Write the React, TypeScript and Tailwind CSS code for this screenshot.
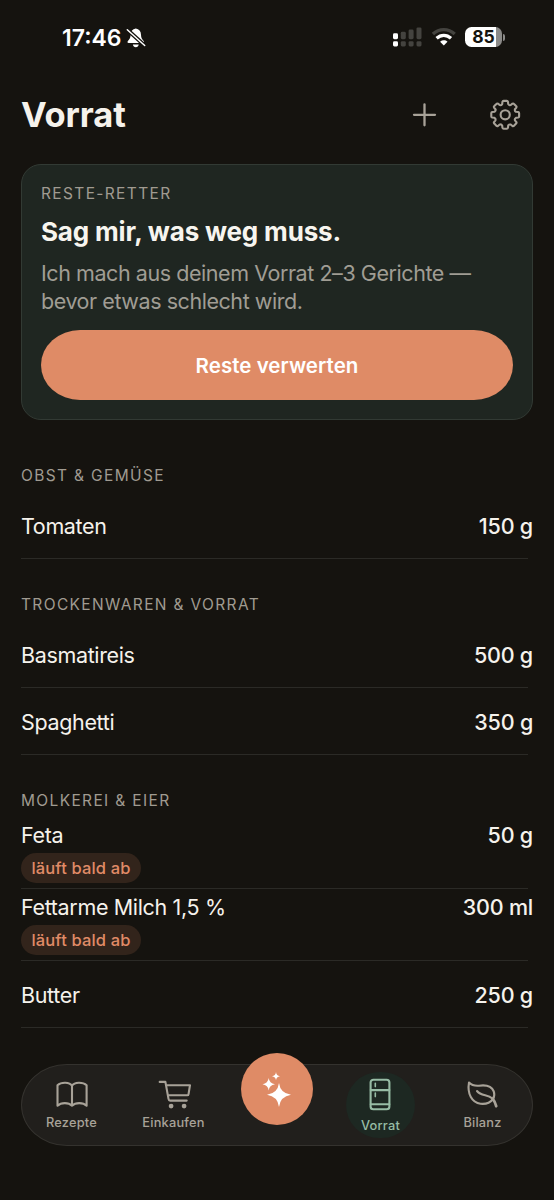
import type { ReactNode } from "react";

const UI = "font-['Inter','Liberation_Sans',sans-serif]";

function gearPath(cx: number, cy: number) {
  const polar = (r: number, deg: number) => {
    const a = (deg * Math.PI) / 180;
    return `${(cx + r * Math.sin(a)).toFixed(2)} ${(cy - r * Math.cos(a)).toFixed(2)}`;
  };
  let d = "";
  for (let i = 0; i < 8; i++) {
    const a = i * 45;
    d += `${i ? "L" : "M"}${polar(10.7, a - 19)} L${polar(11.2, a - 15.5)} L${polar(13.3, a - 12)} Q${polar(14.2, a - 10)} ${polar(14, a - 6)} L${polar(14, a + 6)} Q${polar(14.2, a + 10)} ${polar(13.3, a + 12)} L${polar(11.2, a + 15.5)} Q${polar(10.2, a + 22.5)} ${polar(10.7, a + 26)} `;
  }
  return d + "Z";
}

function StatusBar() {
  return (
    <div className="flex h-[75px] items-center justify-between pl-[62px] pr-[48px]">
      <div className="flex items-center">
        <span className="w-[64px] whitespace-nowrap pt-[1px] text-[23px] font-semibold leading-none tracking-[0px] text-white">17:46</span>
        <svg className="h-[20px] w-[20px]" viewBox="0 0 20 20">
          <path d="M9.8 0.6C6.4 1 4.7 3.4 4.6 6.8C4.5 10.2 3.4 11.5 1.9 13.1C1.1 14 1.4 15 2.6 15H16.8C18.2 15 18.4 14 17.7 13.1C16.1 11.4 15.1 10.2 15 6.8C14.9 3.3 13.1 1 9.8 0.6Z" fill="#fff" />
          <path d="M6.9 16.6H12.7C12.4 18.4 11.4 19.3 9.8 19.3C8.2 19.3 7.2 18.4 6.9 16.6Z" fill="#fff" />
          <path d="M1 1.4L18.8 17.6" stroke="#15130f" strokeWidth="4" />
          <path d="M1.3 1.7L18.7 17.5" stroke="#fff" strokeWidth="1.5" strokeLinecap="round" />
        </svg>
      </div>
      <div className="flex items-center pb-[1px]">
        <svg className="mr-[9px] h-[20px] w-[29px]" viewBox="0 0 29 20">
          <g fill="#fff">
            <rect x="0" y="6.2" width="5" height="6" rx="1.4" />
            <rect x="0" y="14.2" width="5" height="5.2" rx="1.4" />
          </g>
          <g fill="#44433f">
            <rect x="7.8" y="4.8" width="5" height="7.4" rx="1.4" />
            <rect x="15.6" y="2.5" width="5" height="9.7" rx="1.4" />
            <rect x="23.5" y="0.4" width="5" height="11.8" rx="1.4" />
            <rect x="7.8" y="14.2" width="5" height="5.2" rx="1.4" />
            <rect x="15.6" y="14.2" width="5" height="5.2" rx="1.4" />
            <rect x="23.5" y="14.2" width="5" height="5.2" rx="1.4" />
          </g>
        </svg>
        <svg className="mr-[8px] h-[20px] w-[26px]" viewBox="0 0 26 20" fill="none">
          <path d="M1.9 7.1C8.3 1.1 17.3 1.1 23.7 7.1" stroke="#44433f" strokeWidth="3.4" />
          <path d="M5.6 11.3C9.9 7.3 15.7 7.3 20 11.3" stroke="#fff" strokeWidth="3.3" />
          <path d="M9.1 14.7C11.3 12.8 14.3 12.8 16.5 14.7L12.8 18.4Z" fill="#fff" />
        </svg>
        <div className="flex h-5 w-[37px] items-center overflow-hidden rounded-[6.5px] bg-[linear-gradient(90deg,#fff_31px,#8b8a88_31px)]">
          <span className="w-full text-center text-[17.5px] font-bold leading-none text-[#15130f]">85</span>
        </div>
        <div className="ml-[1px] mr-[1px] h-[7px] w-[2px] rounded-r-full bg-[#8b8a88]" />
      </div>
    </div>
  );
}

function Label({ children }: { children: ReactNode }) {
  return <div className="whitespace-nowrap text-[15.5px] leading-[20px] tracking-[1.35px] text-[#a09b91]">{children}</div>;
}

function Row({ name, amount, soon }: { name: string; amount: string; soon?: boolean }) {
  return (
    <div className={soon ? "h-[72px]" : "h-[67px]"}>
      <div className={`flex items-center justify-between whitespace-nowrap text-[#f5f2ec] ${soon ? "h-[36px] pt-[2px]" : "h-[66px] pt-[3px]"}`}>
        <span className="text-[21.5px] leading-none tracking-[-0.35px]">{name}</span>
        <span className="text-[21.5px] font-medium leading-none tracking-[-0.2px]">{amount}</span>
      </div>
      {soon && (
        <div className="mb-[5px] flex h-[30px] w-[120px] items-center justify-center rounded-full bg-[#32241b] text-[16.5px] font-medium tracking-[0.15px] text-[#e08b67]">
          läuft bald ab
        </div>
      )}
      <div className="mr-[5px] h-px bg-[#2b2a26]" />
    </div>
  );
}

function Tab({ label, active, children }: { label: string; active?: boolean; children: ReactNode }) {
  return (
    <div
      className={
        active
          ? "flex h-[66px] w-[69px] flex-col items-center rounded-[33px] bg-[#1d2822] pt-[5px] text-[#97bca5]"
          : "flex h-[66px] w-[69px] flex-col items-center pt-[5px] text-[#a8a298]"
      }
    >
      <svg className="h-[34px] w-[34px] shrink-0" viewBox="0 0 34 34" fill="none" stroke="currentColor" strokeWidth="2.1" strokeLinecap="round" strokeLinejoin="round">
        {children}
      </svg>
      <span className={`whitespace-nowrap text-[12.8px] font-medium leading-[16px] tracking-[0.2px] ${active ? "mt-[7px]" : "mt-[4px]"}`}>{label}</span>
    </div>
  );
}

export default function App() {
  return (
    <div className={`flex h-[1200px] w-[554px] flex-col overflow-hidden bg-[#15130f] ${UI}`}>
      <StatusBar />
      <header className="flex h-[89px] items-start justify-between pl-[21px] pr-[33px] pt-[24px]">
        <h1 className="text-[34.5px] font-bold leading-[32px] tracking-[-0.1px] text-[#f5f2ec]">Vorrat</h1>
        <div className="flex gap-[49px]">
          <svg className="h-8 w-8" viewBox="0 0 32 32" fill="none" stroke="#a8a298" strokeWidth="2.3" strokeLinecap="round">
            <path d="M16.5 5.3V26.3M6 15.8H27" />
          </svg>
          <svg className="h-8 w-8" viewBox="0 0 32 32" fill="none" stroke="#a8a298" strokeWidth="2.1" strokeLinejoin="round">
            <path d={gearPath(16.2, 15.8)} />
            <circle cx="16.2" cy="15.8" r="4.6" />
          </svg>
        </div>
      </header>

      <section className="mx-[21px] h-[256px] shrink-0 rounded-[20px] border border-[#323a34] bg-[#1f2621] px-[19px] pt-[19px]">
        <Label>RESTE-RETTER</Label>
        <h2 className="mt-[12px] whitespace-nowrap text-[26px] font-bold leading-[32px] tracking-[-0.18px] text-[#f7f5ef]">Sag mir, was weg muss.</h2>
        <p className="mt-[11px] whitespace-nowrap text-[21.5px] leading-[28px] tracking-[-0.44px] text-[#a09d94]">
          Ich mach aus deinem Vorrat 2–3 Gerichte —
          <br />
          bevor etwas schlecht wird.
        </p>
        <button className="mt-[15px] flex h-[70px] w-full items-center justify-center rounded-[39px/35px] bg-[#df8b66] pt-[2px] text-[20.5px] font-semibold tracking-[0.05px] text-white">
          Reste verwerten
        </button>
      </section>

      <main className="flex flex-col pl-[21px] pr-[21px]">
        <div className="h-[72px] pt-[46px]"><Label>OBST &amp; GEMÜSE</Label></div>
        <Row name="Tomaten" amount="150 g" />
        <div className="h-[62px] pt-[36px]"><Label>TROCKENWAREN &amp; VORRAT</Label></div>
        <Row name="Basmatireis" amount="500 g" />
        <Row name="Spaghetti" amount="350 g" />
        <div className="h-[62px] pt-[36px]"><Label>MOLKEREI &amp; EIER</Label></div>
        <Row name="Feta" amount="50 g" soon />
        <Row name="Fettarme Milch 1,5 %" amount="300 ml" soon />
        <Row name="Butter" amount="250 g" />
      </main>

      <nav className="mx-[21px] mt-[36px] flex h-[82px] shrink-0 items-start justify-between rounded-[46px/41px] border border-[#34322e] bg-[#211f1c] pl-[15px] pr-[15px] pt-[7px]">
        <Tab label="Rezepte">
          <path d="M17 8.7C14.6 4.9 6.1 4.9 2.5 8.3V28.7C6.1 25.2 13.6 25.2 17 28.7C20.4 25.2 28.1 25.2 31.6 28.7V8.3C28 4.9 19.4 4.9 17 8.7ZM17 8.7V28.7" />
        </Tab>
        <Tab label="Einkaufen">
          <path d="M2.7 4.9H8.4L11.5 21.9C11.7 23.1 12.2 23.6 13.2 23.6H29.7M9.2 8.2H33L31.5 17.3C31.4 18 31 18.3 30.2 18.3H11.2" />
          <circle cx="14.1" cy="29.1" r="2.4" fill="currentColor" stroke="none" />
          <circle cx="27.1" cy="29.1" r="2.4" fill="currentColor" stroke="none" />
        </Tab>
        <div className="-mt-[19px] flex h-[72px] w-[72px] items-center justify-center rounded-full bg-[#df8b66]">
          <svg className="h-[72px] w-[72px]" viewBox="0 0 72 72" fill="#fff">
            <path d="M38 30Q39.3 40.3 50 41.8Q39.3 43.5 38 54Q36.7 43.5 26 41.8Q36.7 40.3 38 30Z" />
            <path d="M27.7 25Q28.3 30.5 34 31.3Q28.3 32.1 27.7 37.6Q27 32.1 21.5 31.3Q27 30.5 27.7 25Z" />
            <path d="M35 19Q35.4 22.7 39 23.2Q35.4 23.7 35 27.3Q34.6 23.7 31 23.2Q34.6 22.7 35 19Z" />
          </svg>
        </div>
        <Tab label="Vorrat" active>
          <rect x="6.6" y="2.7" width="18.8" height="29.5" rx="2.8" />
          <path d="M6.8 13.1H25.3M6.8 27.3H25.3" />
          <path d="M11.3 6.2V9.6M11.3 16V19.6" strokeWidth="1.6" />
        </Tab>
        <Tab label="Bilanz">
          <path d="M3 5.5C5.5 8.2 9 9 13 8.7C20 7.7 25.5 8.7 27.8 14.5C28.9 17.5 28.5 19.5 27 22C24 26 19 27.3 14.5 26.8C6 25.5 1 17 3 5.5Z" />
          <path d="M11 14C15 19.3 22 17.2 26 21.3" />
          <path d="M26.8 21.8C28.6 24 29.5 26.5 30.2 29.2" strokeWidth="2.8" />
        </Tab>
      </nav>
    </div>
  );
}
